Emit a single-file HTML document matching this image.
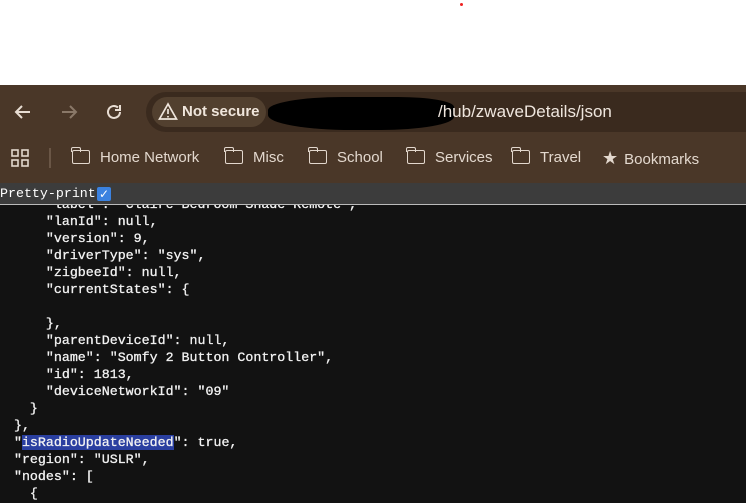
<!DOCTYPE html>
<html><head><meta charset="utf-8"><style>
*{margin:0;padding:0;box-sizing:border-box}
body{width:746px;height:503px;overflow:hidden;background:#fff;position:relative;font-family:"Liberation Sans",sans-serif}
.dot{position:absolute;left:460px;top:3px;width:3px;height:3px;border-radius:50%;background:#e22}
.tb{position:absolute;left:0;top:85px;width:746px;height:98px;background:#4a3728}
.addr{position:absolute;left:146px;top:92px;width:640px;height:40px;border-radius:20px;background:#3a2a1e}
.chip{position:absolute;left:152px;top:97px;width:114px;height:30px;border-radius:15px;background:#52402f;color:#f0e6dc;font-size:15px;font-weight:bold;line-height:30px;padding-left:30px}
.blk{position:absolute;left:268px;top:97px;width:186px;height:33px;background:#000;border-radius:40% 30% 40% 45%}
.url{position:absolute;left:438px;top:102px;color:#efe6de;font-size:17px}
.bm{position:absolute;top:148px;color:#e3d8ce;font-size:15px;line-height:20px}
.fold{display:inline-block;width:18px;height:14px;border:1.6px solid #e3d8ce;border-radius:2px;vertical-align:-2px;margin-right:10px;position:relative}
.fold:before{content:"";position:absolute;left:-1.6px;top:-4px;width:8px;height:4px;border:1.6px solid #e3d8ce;border-bottom:none;border-radius:2px 2px 0 0}
.pp{position:absolute;left:0;top:183px;width:746px;height:22px;background:#3c3c3c;border-bottom:1px solid #bbb;color:#fff;font-family:"Liberation Mono",monospace;font-size:13.3px;line-height:21px}
.cb{position:absolute;left:97px;top:4px;width:14px;height:14px;background:#3b82e0;border-radius:2px;color:#fff;font-size:12px;line-height:14px;text-align:center;font-family:"DejaVu Sans",sans-serif}
.code{position:absolute;left:0;top:205px;width:746px;height:298px;background:#121212;overflow:hidden}
pre{position:absolute;left:-2px;top:-9px;color:#f2f2f2;font-family:"Liberation Mono",monospace;font-size:13.3px;line-height:17px;-webkit-text-stroke:0.3px #f2f2f2}
.hl{background:#2a3fa0}
</style></head><body>
<div class="dot"></div>
<div class="tb"></div>
<svg style="position:absolute;left:12px;top:101px" width="22" height="22" viewBox="0 0 22 22"><path d="M18 11H5M10 5l-6 6 6 6" stroke="#e8ddd3" stroke-width="2" fill="none"/></svg>
<svg style="position:absolute;left:58px;top:101px" width="22" height="22" viewBox="0 0 22 22"><path d="M4 11h13M12 5l6 6-6 6" stroke="#8a7868" stroke-width="2" fill="none"/></svg>
<svg style="position:absolute;left:103px;top:101px" width="22" height="22" viewBox="0 0 22 22"><path d="M17 11a6 6 0 1 1-2-4.5" stroke="#e8ddd3" stroke-width="2" fill="none"/><path d="M17 4v5h-5" stroke="#e8ddd3" stroke-width="2" fill="none"/></svg>
<div class="addr"></div>
<div class="chip">Not secure</div>
<svg style="position:absolute;left:158px;top:102px" width="20" height="19" viewBox="0 0 20 19"><path d="M10 2L1.5 17h17z" stroke="#f0e6dc" stroke-width="1.7" fill="none"/><path d="M10 7v5M10 14v1.5" stroke="#f0e6dc" stroke-width="1.7"/></svg>
<div class="blk"></div>
<div class="url">/hub/zwaveDetails/json</div>
<svg style="position:absolute;left:11px;top:149px" width="18" height="18" viewBox="0 0 18 18" fill="none" stroke="#e3d8ce" stroke-width="1.6"><rect x="1" y="1" width="6" height="6"/><rect x="11" y="1" width="6" height="6"/><rect x="1" y="11" width="6" height="6"/><rect x="11" y="11" width="6" height="6"/></svg>
<div style="position:absolute;left:49px;top:148px;width:2px;height:20px;background:#6a5646"></div>
<div class="bm" style="left:72px"><span class="fold"></span>Home Network</div>
<div class="bm" style="left:225px"><span class="fold"></span>Misc</div>
<div class="bm" style="left:309px"><span class="fold"></span>School</div>
<div class="bm" style="left:407px"><span class="fold"></span>Services</div>
<div class="bm" style="left:512px"><span class="fold"></span>Travel</div>
<div class="bm" style="left:602px"><span style="font-size:18px;margin-right:6px">★</span>Bookmarks</div>
<div class="pp">Pretty-print<span class="cb">✓</span></div>
<div class="code"><pre>      "label": "Claire Bedroom Shade Remote",
      "lanId": null,
      "version": 9,
      "driverType": "sys",
      "zigbeeId": null,
      "currentStates": {

      },
      "parentDeviceId": null,
      "name": "Somfy 2 Button Controller",
      "id": 1813,
      "deviceNetworkId": "09"
    }
  },
  "<span class="hl">isRadioUpdateNeeded</span>": true,
  "region": "USLR",
  "nodes": [
    {</pre></div>
</body></html>
